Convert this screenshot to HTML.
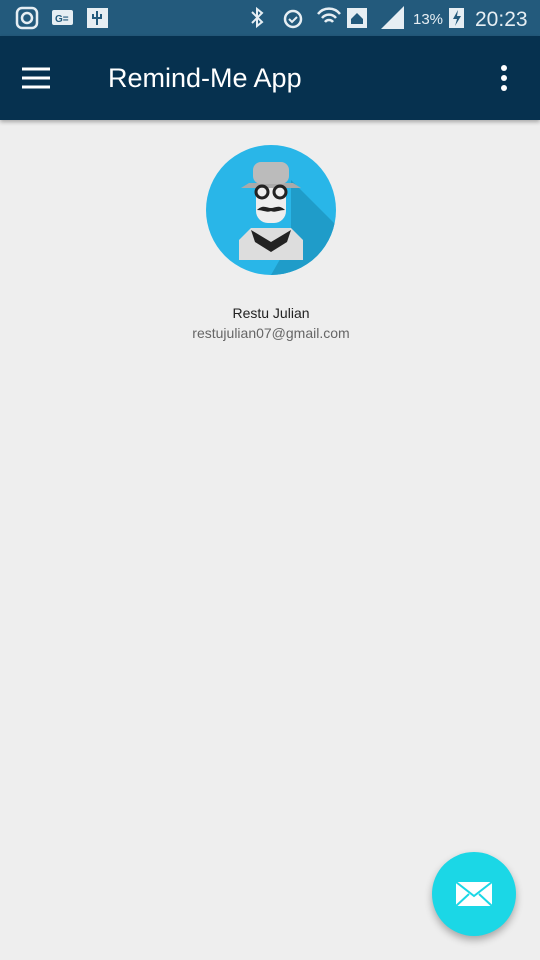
<!DOCTYPE html>
<html><head><meta charset="utf-8"><style>
body{margin:0;width:540px;height:960px;background:#eeeeee;font-family:"Liberation Sans",sans-serif;position:relative;overflow:hidden}
.sb{position:absolute;top:0;left:0;width:540px;height:36px;background:#235a7c;color:#e6eef3}
.ab{position:absolute;top:36px;left:0;width:540px;height:84px;background:#06314f;box-shadow:0 2px 4px rgba(0,0,0,.3)}
.t{position:absolute;left:108px;top:27px;font-size:27px;color:#fff}
.name{position:absolute;top:305px;width:540px;left:1px;text-align:center;font-size:14px;color:#222}
.mail{position:absolute;top:325px;width:540px;left:1px;text-align:center;font-size:14px;color:#666}
.fab{position:absolute;left:432px;top:852px;width:84px;height:84px;border-radius:50%;background:#1bd7e6;box-shadow:0 4px 8px rgba(0,0,0,.3)}
</style></head><body>
<div class="sb">
<svg width="540" height="36" style="position:absolute;left:0;top:0">
<rect x="17" y="8" width="20" height="20" rx="5" fill="none" stroke="#e6eef3" stroke-width="2.5"/><circle cx="27" cy="18" r="5" fill="none" stroke="#e6eef3" stroke-width="2.5"/>
<rect x="52" y="10" width="21" height="15" rx="2" fill="#e6eef3"/><text x="55" y="22" font-size="10" font-weight="bold" fill="#235a7c">G=</text>
<rect x="87" y="8" width="21" height="20" fill="#e6eef3"/><path d="M97 11v14M93 14v4h8v-4" stroke="#235a7c" stroke-width="2" fill="none"/>
<path d="M252 12l10 10-5 4V9l5 4-10 10" stroke="#e6eef3" stroke-width="2" fill="none"/>
<circle cx="293" cy="19" r="8" fill="none" stroke="#e6eef3" stroke-width="2.5"/><path d="M289 19l3 3 5-5" stroke="#e6eef3" stroke-width="2" fill="none"/>
<path d="M318 14a14 14 0 0 1 22 0M322 18a9 9 0 0 1 14 0M325 22a5 5 0 0 1 8 0" stroke="#e6eef3" stroke-width="2.5" fill="none"/>
<rect x="347" y="8" width="20" height="20" fill="#e6eef3"/><path d="M351 19l6-6 6 6v5h-12z" fill="#235a7c"/>
<path d="M381 29L404 6V29z" fill="#e6eef3"/>
<text x="413" y="24" font-size="15" fill="#e6eef3">13%</text>
<rect x="449" y="8" width="15" height="20" fill="#e6eef3"/><path d="M458 10l-5 9h4l-2 7 6-10h-4z" fill="#235a7c"/>
<text x="475" y="26" font-size="21" fill="#e6eef3">20:23</text>
</svg></div>
<div class="ab">
<svg width="540" height="84" style="position:absolute;left:0;top:0">
<path d="M22 33h28M22 42h28M22 51h28" stroke="#fff" stroke-width="3"/>
<circle cx="504" cy="32" r="3" fill="#fff"/><circle cx="504" cy="42" r="3" fill="#fff"/><circle cx="504" cy="52" r="3" fill="#fff"/>
</svg>
<div class="t">Remind-Me App</div></div>
<svg width="140" height="140" style="position:absolute;left:201px;top:140px">
<defs><clipPath id="c"><circle cx="70" cy="70" r="65"/></clipPath></defs>
<circle cx="70" cy="70" r="65" fill="#29b6e8"/>
<path d="M90 40L140 90 110 135 70 135 90 100z" fill="#1f9cc9" clip-path="url(#c)"/>
<path d="M38 120h64v-20l-12-12H50l-12 12z" fill="#ddd"/>
<path d="M50 90l20 12 20-12-4 12-16 10-16-10z" fill="#222"/>
<rect x="55" y="38" width="30" height="45" rx="12" fill="#eee"/>
<path d="M40 48h60l-8-5H48z" fill="#aaa"/><rect x="52" y="22" width="36" height="22" rx="8" fill="#bbb"/>
<circle cx="61" cy="52" r="6" fill="none" stroke="#222" stroke-width="3"/><circle cx="79" cy="52" r="6" fill="none" stroke="#222" stroke-width="3"/>
<path d="M56 70c6-6 10-2 14-2s8-4 14 2c-6 0-10 3-14 1-4 2-8-1-14-1z" fill="#222"/>
</svg>
<div class="name">Restu Julian</div>
<div class="mail">restujulian07@gmail.com</div>
<div class="fab"><svg width="84" height="84"><rect x="24" y="30" width="36" height="24" fill="#fff"/><path d="M24 30l18 14 18-14M24 54l13-12M60 54l-13-12" stroke="#1bd7e6" stroke-width="2" fill="none"/></svg></div>
</body></html>
